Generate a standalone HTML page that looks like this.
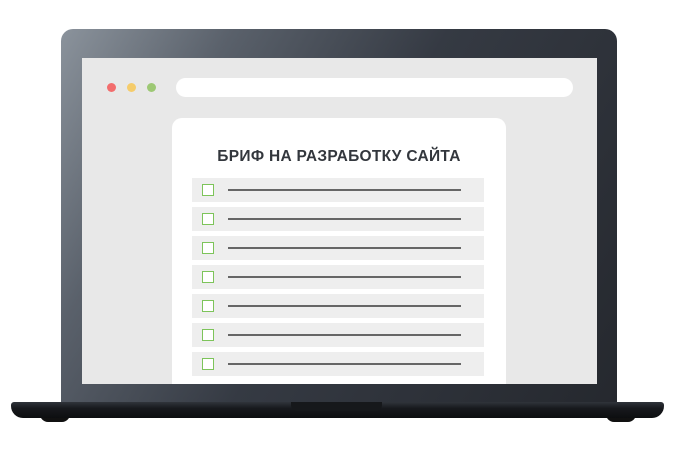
<!DOCTYPE html>
<html><head><meta charset="utf-8"><style>
body{margin:0;width:676px;height:455px;background:#fff;position:relative;overflow:hidden;font-family:"Liberation Sans",sans-serif}
.lid{position:absolute;left:61px;top:29px;width:556px;height:380px;border-radius:12px 12px 0 0;background:linear-gradient(120deg,#8b939c 0%,#5a616b 22%,#353a43 50%,#25282e 100%)}
.screen{position:absolute;left:82px;top:58px;width:515px;height:326px;background:#e8e8e8;overflow:hidden}
.dot{position:absolute;top:25px;width:9px;height:9px;border-radius:50%}
.url{position:absolute;left:94px;top:20px;width:397px;height:19px;border-radius:10px;background:#fff}
.card{position:absolute;left:90px;top:60px;width:334px;height:280px;border-radius:10px;background:#fff}
.title{position:absolute;left:0;right:0;text-align:center;font-weight:bold;font-size:15.5px;color:#33373d;letter-spacing:.3px}
.row{position:absolute;left:20px;width:292px;height:24px;background:#eeeeee}
.cb{position:absolute;left:10px;top:6px;width:10px;height:10px;border:1px solid #7dc45a;background:#fff}
.ln{position:absolute;left:36px;top:11px;width:233px;height:1.5px;background:#666}
.base{position:absolute;left:11px;top:402px;width:653px;height:16px;border-radius:3px 3px 12px 12px;background:linear-gradient(#30343b,#17191d 40%,#0d0e10)}
.notch{position:absolute;left:291px;top:402px;width:91px;height:9px;border-radius:0 0 6px 6px;background:#16181b}
.foot{position:absolute;top:414px;width:30px;height:8px;border-radius:0 0 15px 15px;background:#111}
</style></head><body>
<div class="lid"></div>
<div class="screen">
<div class="dot" style="left:25px;background:#f26d6d"></div>
<div class="dot" style="left:45px;background:#f5cc6b"></div>
<div class="dot" style="left:65px;background:#9dc874"></div>
<div class="url"></div>
<div class="card">
<div class="title" style="top:30px">БРИФ НА РАЗРАБОТКУ САЙТА</div>
<div class="row" style="top:60px"><div class="cb"></div><div class="ln"></div></div>
<div class="row" style="top:89px"><div class="cb"></div><div class="ln"></div></div>
<div class="row" style="top:118px"><div class="cb"></div><div class="ln"></div></div>
<div class="row" style="top:147px"><div class="cb"></div><div class="ln"></div></div>
<div class="row" style="top:176px"><div class="cb"></div><div class="ln"></div></div>
<div class="row" style="top:205px"><div class="cb"></div><div class="ln"></div></div>
<div class="row" style="top:234px"><div class="cb"></div><div class="ln"></div></div>
</div>
</div>
<div class="foot" style="left:40px"></div>
<div class="foot" style="left:606px"></div>
<div class="base"></div>
<div class="notch"></div>
</body></html>
